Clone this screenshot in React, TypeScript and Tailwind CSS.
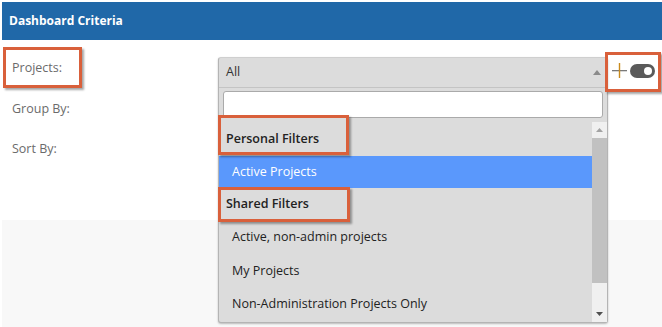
import React from "react";

const font = { fontFamily: '"Open Sans", "Noto Sans", sans-serif' };

function Hl({ className }: { className: string }) {
  return (
    <div
      className={`absolute border-[3px] border-[#d9603b] shadow-[2px_2px_2px_rgba(0,0,0,0.35)] ${className}`}
    />
  );
}

export default function App() {
  const items = ["Active, non-admin projects", "My Projects", "Non-Administration Projects Only"];
  return (
    <div className="relative w-[662px] h-[327px] overflow-hidden bg-white text-[12px]" style={font}>
      <div className="pl-[2px] pt-[2px] flex flex-col h-full">
        <div className="h-[38px] bg-[#2068a8] flex items-center pl-[7px] text-white font-bold text-[12px]">
          Dashboard Criteria
        </div>
        <div className="h-[180px] bg-white flex flex-col pl-[10px] pt-[18px] gap-[20.5px] text-[#6b6b6b] text-[12.5px]">
          <div className="h-[20px] leading-[20px]">Projects:</div>
          <div className="h-[20px] leading-[20px]">Group By:</div>
          <div className="h-[20px] leading-[20px]">Sort By:</div>
        </div>
        <div className="flex-1 bg-[#f8f8f8]" />
      </div>

      {/* Dropdown */}
      <div className="absolute left-[218px] top-[57px] w-[390px] h-[266px] flex flex-col bg-[#dcdcdc] border border-[#b4b4b4] border-t-[#cfcfcf] rounded-[3px] shadow-[0_1px_2px_rgba(0,0,0,0.25)]">
        <div className="h-[30px] flex items-center justify-between pl-[7px] pr-[6px] border-b border-[#c4c4c4] text-[#333] text-[12.5px]">
          <span>All</span>
          <svg width="8" height="5" viewBox="0 0 8 5">
            <path d="M0 5 L4 0 L8 5 Z" fill="#8a8a8a" />
          </svg>
        </div>
        <div className="px-[4px] pt-[3px]">
          <div className="h-[27px] bg-white border border-[#aaaaaa] rounded-[3px]" />
        </div>
        <div className="flex flex-1 pt-[4px] min-h-0">
          <div className="flex-1 flex flex-col pt-[1px] text-[12.5px] text-[#222]">
            <div className="h-[33px] flex items-center pl-[7px] font-semibold">Personal Filters</div>
            <div className="h-[32px] flex items-center pl-[13px] bg-[#5a98fc] text-white">Active Projects</div>
            <div className="h-[33px] flex items-center pl-[7px] font-semibold">Shared Filters</div>
            {items.map((t) => (
              <div key={t} className="h-[33.3px] flex items-center pl-[13px]">
                {t}
              </div>
            ))}
          </div>
          <div className="w-[15px] bg-[#f0f0f0] flex flex-col items-center">
            <div className="h-[16px] flex items-center justify-center">
              <svg width="7" height="4" viewBox="0 0 7 4">
                <path d="M0 4 L3.5 0 L7 4 Z" fill="#a3a3a3" />
              </svg>
            </div>
            <div className="w-[15px] h-[145px] bg-[#c1c1c1]" />
            <div className="flex-1" />
            <div className="h-[16px] flex items-center justify-center">
              <svg width="7" height="4" viewBox="0 0 7 4">
                <path d="M0 0 L3.5 4 L7 0 Z" fill="#505050" />
              </svg>
            </div>
          </div>
        </div>
      </div>

      {/* plus + toggle */}
      <div className="absolute left-[612px] top-[63px] flex items-center gap-[3px]">
        <svg width="15" height="15" viewBox="0 0 15 15">
          <rect x="0" y="7" width="15" height="1.3" fill="#7a7a7a" />
          <rect x="6.8" y="0" width="1.4" height="15" fill="#c98a1c" />
        </svg>
        <div className="w-[25px] h-[14px] rounded-full bg-[#5a5a5a] flex items-center justify-end pr-[3px]">
          <div className="w-[8px] h-[8px] rounded-full bg-white" />
        </div>
      </div>

      {/* annotation boxes */}
      <Hl className="left-[3px] top-[47px] w-[79px] h-[41px]" />
      <Hl className="left-[605px] top-[52px] w-[56px] h-[40px]" />
      <Hl className="left-[218px] top-[115px] w-[131px] h-[40px]" />
      <Hl className="left-[218px] top-[187px] w-[132px] h-[35px]" />
    </div>
  );
}
